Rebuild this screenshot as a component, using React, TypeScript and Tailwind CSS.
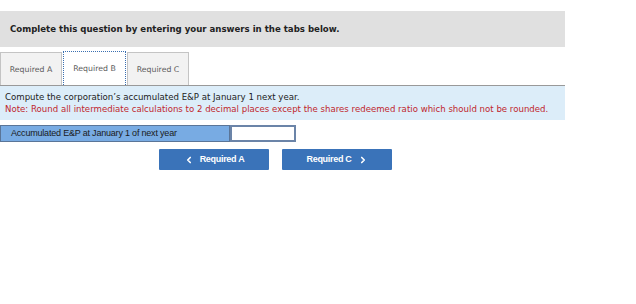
import { ChevronLeft, ChevronRight } from "lucide-react";

const verdana = { fontFamily: '"DejaVu Sans", Verdana, sans-serif' };
const arial = { fontFamily: '"Liberation Sans", Arial, sans-serif' };

function Tab({ label, active }: { label: string; active?: boolean }) {
  return (
    <div
      className={
        active
          ? "flex h-[34px] w-[63px] items-center justify-center border border-dotted border-[#3a6fb0] border-b-0 bg-white pt-[1px] text-[7.8px] text-[#5a5a5a]"
          : "flex h-[33px] w-[62px] items-center justify-center border border-[#c4c4c4] border-b-0 bg-[#f2f2f2] pt-[1px] text-[7.8px] text-[#5a5a5a]"
      }
      style={verdana}
    >
      {label}
    </div>
  );
}

export default function App() {
  return (
    <div className="h-[304px] w-[636px] bg-white pt-[11px]">
      <div className="w-[565px]">
        {/* Instructions bar */}
        <div
          className="flex h-[36px] items-center bg-[#e0e0e0] pl-[10px] text-[8.6px] font-bold text-[#222]"
          style={verdana}
        >
          Complete this question by entering your answers in the tabs below.
        </div>

        {/* Tabs */}
        <div className="mt-[4px] flex items-end gap-[1px] border-b border-[#999]">
          <Tab label="Required A" />
          <Tab label="Required B" active />
          <Tab label="Required C" />
        </div>

        {/* Prompt */}
        <div className="bg-[#dcedf9] px-[5px] pb-[5px] pt-[5px] text-[8.6px] leading-[12px]" style={verdana}>
          <p className="text-[#222]">
            Compute the corporation’s accumulated E&amp;P at January 1 next year.
          </p>
          <p className="text-[#c0272d]">
            Note: Round all intermediate calculations to 2 decimal places except the shares redeemed ratio which should not be rounded.
          </p>
        </div>
      </div>

      {/* Answer row */}
      <div className="mt-[5px] flex h-[17px]" style={arial}>
        <div className="flex w-[230px] items-center border border-[#5a7598] bg-[#78abe3] pl-[10px] text-[9px] tracking-[-0.2px] text-[#1a1a1a]">
          Accumulated E&amp;P at January 1 of next year
        </div>
        <input className="w-[66px] border-2 border-[#6b84a8] bg-white outline-none" />
      </div>

      {/* Navigation */}
      <div className="mt-[7px] flex gap-[13px] pl-[159px]" style={arial}>
        <button className="flex h-[21px] w-[110px] items-center justify-center gap-[6px] rounded-[1px] bg-[#3a73b9] text-[9px] font-bold tracking-[-0.3px] text-white">
          <ChevronLeft size={10} strokeWidth={4} />
          Required A
        </button>
        <button className="flex h-[21px] w-[110px] items-center justify-center gap-[6px] rounded-[1px] bg-[#3a73b9] text-[9px] font-bold tracking-[-0.3px] text-white">
          Required C
          <ChevronRight size={10} strokeWidth={4} />
        </button>
      </div>
    </div>
  );
}
